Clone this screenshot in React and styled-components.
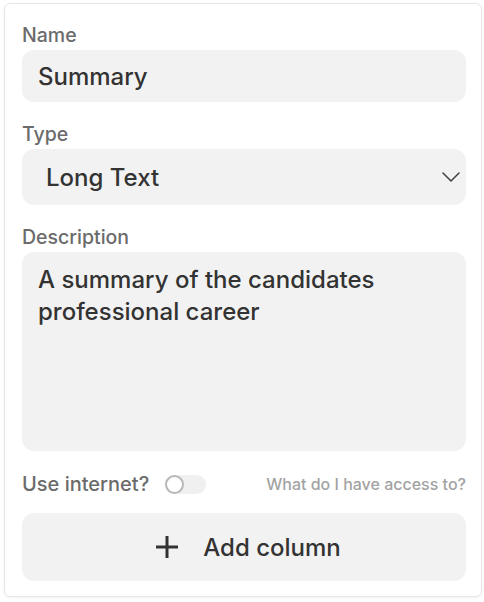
import styled, { createGlobalStyle } from "styled-components";

const GlobalStyle = createGlobalStyle`
    body {
        margin: 0;
        background: #ffffff;
        font-family: Inter, "Noto Sans", sans-serif;
    }
`

export default function App() {
    return (
        <Page>
            <GlobalStyle />
            <Card>
                <Field>
                    <Label>Name</Label>
                    <TextInput readOnly defaultValue="Summary" />
                </Field>
                <Field>
                    <Label>Type</Label>
                    <Select>
                        <span>Long Text</span>
                        <svg width="18" height="10" viewBox="0 0 18 10" fill="none">
                            <path d="M1 1l8 8 8-8" stroke="#444" strokeWidth="1.6" strokeLinecap="round" strokeLinejoin="round" />
                        </svg>
                    </Select>
                </Field>
                <Field>
                    <Label>Description</Label>
                    <TextArea readOnly defaultValue="A summary of the candidates professional career" />
                </Field>
                <OptionRow>
                    <Toggle>
                        <span>Use internet?</span>
                        <Switch $on={false} />
                    </Toggle>
                    <HelpLink>What do I have access to?</HelpLink>
                </OptionRow>
                <AddButton>
                    <svg width="24" height="24" viewBox="0 0 24 24" fill="none">
                        <path d="M12 1v22M1 12h22" stroke="#333" strokeWidth="3" />
                    </svg>
                    Add column
                </AddButton>
            </Card>
        </Page>
    )
}

const Page = styled.div`
    padding: 3px 2px 4px 4px;
`

const Card = styled.div`
    display: flex;
    flex-direction: column;
    gap: 20px;
    width: 478px;
    box-sizing: border-box;
    padding: 19px 15px 15px 17px;
    border: 1px solid #e6e6e6;
    border-radius: 6px;
    box-shadow: 0 1px 3px rgba(0,0,0,.06);
    background: #fff;
`

const Field = styled.div`
    display: flex;
    flex-direction: column;
    gap: 3px;
`

const Label = styled.label`
    font-size: 19.5px;
    line-height: 24px;
    font-weight: 500;
    color: #6b6b6b;
`

const fieldBox = `
    box-sizing: border-box;
    width: 100%;
    border: none;
    outline: none;
    background: #f2f2f2;
    border-radius: 12px;
    font-family: Inter, "Noto Sans", sans-serif;
    font-size: 24px;
    font-weight: 500;
    color: #333;
`

const TextInput = styled.input`
    ${fieldBox}
    height: 52px;
    padding: 0 16px;
`

const Select = styled.div`
    ${fieldBox}
    height: 56px;
    padding: 0 6px 0 24px;
    display: flex;
    align-items: center;
    justify-content: space-between;
`

const TextArea = styled.textarea`
    ${fieldBox}
    display: block;
    height: 199px;
    padding: 12px 16px;
    line-height: 32px;
    resize: none;
`

const OptionRow = styled.div`
    display: flex;
    align-items: center;
    justify-content: space-between;
    margin-top: 1px;
    height: 24px;
`

const Toggle = styled.div`
    display: flex;
    align-items: center;
    gap: 16px;
    font-size: 20px;
    font-weight: 500;
    color: #6b6b6b;
`

const Switch = styled.span`
    position: relative;
    width: 41px;
    height: 19px;
    border-radius: 10px;
    background: ${p => p.$on ? "#333" : "#f0f0f0"};

    &::after {
        content: "";
        position: absolute;
        top: 0;
        left: ${p => p.$on ? "22px" : "0"};
        width: 15px;
        height: 15px;
        border-radius: 50%;
        background: #fff;
        border: 2px solid #b8b8b8;
    }
`

const HelpLink = styled.span`
    font-size: 16px;
    font-weight: 500;
    color: #a3a3a3;
`

const AddButton = styled.button`
    ${fieldBox}
    margin-top: -3px;
    height: 68px;
    display: flex;
    align-items: center;
    justify-content: center;
    gap: 24px;
    padding: 0 0 0 8px;
    cursor: pointer;
`
